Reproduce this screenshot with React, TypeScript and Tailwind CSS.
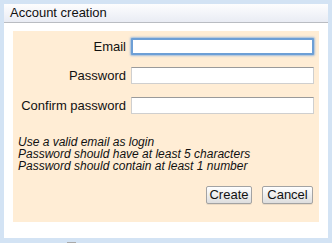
import React from "react";

export default function App() {
  const font = { fontFamily: '"Liberation Sans", Arial, Helvetica, sans-serif' };
  return (
    <div className="w-[332px] h-[243px] bg-[#d3e3f4] pt-[4px] px-[4px] flex flex-col" style={font}>
      <div className="h-[234px] bg-white flex flex-col">
        <div className="h-[19px] bg-gradient-to-b from-[#fdfdfe] to-[#e9ecf4] border-b border-[#b9bcc2] pl-[6px] text-[13px] leading-[18px] text-[#111]">
          Account creation
        </div>
        <div className="mt-[8px] ml-[9px] mr-[9px] h-[191px] bg-[#ffedd5] pt-[7px] pl-[5px] pr-[5px] flex flex-col">
          <div className="flex items-center h-[17px]">
            <div className="w-[108px] shrink-0 whitespace-nowrap text-right text-[13px] text-[#111] leading-[17px]">Email</div>
            <input className="ml-[5px] min-w-0 flex-1 h-[17px] bg-white border-2 border-[#6d9fd6] rounded-[1px] shadow-[0_0_2px_1px_rgba(120,170,225,0.7)] outline-none" />
          </div>
          <div className="flex items-center h-[17px] mt-[12px]">
            <div className="w-[108px] shrink-0 whitespace-nowrap text-right text-[13px] text-[#111] leading-[17px]">Password</div>
            <input type="password" className="ml-[5px] min-w-0 flex-1 h-[17px] bg-white border border-[#cfcfcf] border-t-[#9a9a9a] outline-none" />
          </div>
          <div className="flex items-center h-[17px] mt-[13px]">
            <div className="w-[108px] shrink-0 whitespace-nowrap text-right text-[13px] text-[#111] leading-[17px]">Confirm password</div>
            <input type="password" className="ml-[5px] min-w-0 flex-1 h-[17px] bg-white border border-[#cfcfcf] border-t-[#9a9a9a] outline-none" />
          </div>
          <div className="mt-[22px] italic text-[12px] leading-[12px] text-[#111]">
            <div>Use a valid email as login</div>
            <div>Password should have at least 5 characters</div>
            <div>Password should contain at least 1 number</div>
          </div>
          <div className="mt-[14px] flex justify-end gap-[10px] pr-[1px]">
            <button className="w-[46px] h-[18px] rounded-[2px] border border-[#a3a3a3] bg-gradient-to-b from-white to-[#dedede] text-[13px] leading-[16px] text-[#111] shadow-[0_1px_0_rgba(0,0,0,0.08)]">
              Create
            </button>
            <button className="w-[51px] h-[18px] rounded-[2px] border border-[#a3a3a3] bg-gradient-to-b from-white to-[#dedede] text-[13px] leading-[16px] text-[#111] shadow-[0_1px_0_rgba(0,0,0,0.08)]">
              Cancel
            </button>
          </div>
        </div>
      </div>
      <div className="flex-1 relative">
        <div className="absolute left-[63px] bottom-0 w-[9px] h-[1px] bg-[#a9a9a9]" />
      </div>
    </div>
  );
}
